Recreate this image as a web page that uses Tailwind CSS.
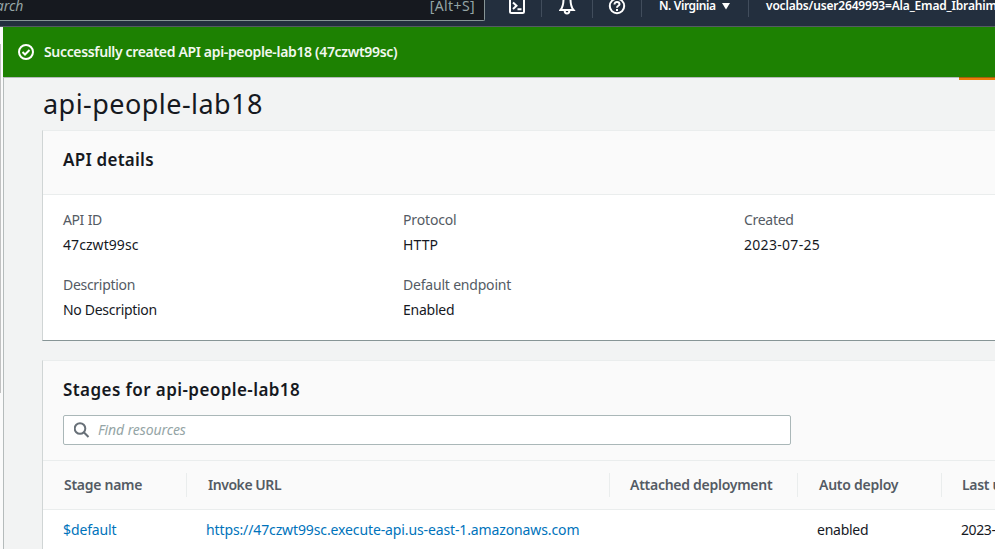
<!DOCTYPE html>
<html lang="en">
<head>
<meta charset="utf-8">
<title>API details</title>
<script src="https://cdn.jsdelivr.net/npm/@tailwindcss/browser@4"></script>
</head>
<body class="w-[995px] h-[549px] overflow-hidden bg-[#f2f3f3] font-['Noto_Sans','Open_Sans',sans-serif] text-[14px] leading-5 text-[#16191f] whitespace-nowrap">
<header class="h-[27px] bg-[#232f3e] border-b border-[#545b64] flex text-white overflow-hidden">
  <div class="w-[485px] h-[21px] shrink-0 bg-[#16191f] border-b border-r border-[#879596] rounded-br-[2px] flex justify-between pr-[9px] text-[#95a5a6] overflow-hidden">
    <span class="-ml-[18px] -mt-[4px] italic tracking-[-0.1px]">Search</span>
    <span class="-mt-[4px] tracking-[0.4px]">[Alt+S]</span>
  </div>
  <div class="w-[57px] shrink-0 h-[17px] border-r border-[#414d5c] pl-[23px]">
    <svg class="-mt-[2px]" width="18" height="17" viewBox="0 0 18 17" fill="none" stroke="#fff" stroke-width="2"><rect x="2" y="-1" width="14" height="16" rx="1.5"/><path d="M5 4.500l3.500 3.200L5 11M9.500 11.300h4"/></svg>
  </div>
  <div class="w-[51px] shrink-0 h-[18px] border-r border-[#414d5c] pl-[17px]">
    <svg width="17" height="16" viewBox="0 0 17 16" fill="none" stroke="#fff" stroke-width="2"><path d="M4.500 -1C4.500 5 4 7 1.500 10h13C12 7 11.500 5 11.500 -1M5.700 11c0 3.200 4.600 3.200 4.600 0"/></svg>
  </div>
  <div class="w-[49px] shrink-0 h-[17px] border-r border-[#414d5c] pl-[15px]">
    <svg class="-mt-[3px]" width="18" height="18" viewBox="0 0 18 18" fill="none" stroke="#fff" stroke-width="2"><circle cx="9" cy="9" r="7.200"/><path d="M6.500 7.500C6.500 4 11.500 4.500 11.500 7.200C11.500 9 9 8.500 9 10.800M9 12v2"/></svg>
  </div>
  <div class="w-[107px] shrink-0 h-[17px] border-r border-[#414d5c] pl-[17px] flex">
    <span class="w-[63px] shrink-0 -mt-[4px] text-[12px] font-semibold tracking-[-0.4px]">N. Virginia</span>
    <svg class="mt-[3px] shrink-0" width="8" height="7"><path d="M0 0h8L4 6.500z" fill="#fff"/></svg>
  </div>
  <div class="pl-[17px] -mt-[4px] text-[12px] font-semibold tracking-[-0.18px]">voclabs/user2649993=Ala_Emad_Ibrahim</div>
</header>
<div class="flex h-[522px]">
  <div class="w-[3px] shrink-0 bg-[#fafafa] pt-[17px]"><div class="w-px h-[349px] bg-[#c1c1c1]"></div></div>
  <div class="w-[992px] shrink-0 relative">
    <div class="h-[50px] bg-[#1d8102] flex items-center pl-[14px] text-[#f2f8f0] font-semibold">
      <svg class="mr-[9px]" width="18" height="18" viewBox="0 0 18 18" fill="none" stroke="#fff" stroke-width="2"><circle cx="9" cy="9" r="7"/><path d="M5.500 9l2.500 2.500L12.500 7"/></svg>
      <span class="tracking-[-0.34px]">Successfully created API api-people-lab18 (47czwt99sc)</span>
    </div>
    <div class="absolute right-0 top-[50px] w-[36px] h-[3px] bg-[#eb7d08] border-t border-[#a36010]"></div>
    <main class="h-[472px] border-t border-l border-[#b5bbbb] pl-[38px]">
      <h1 class="h-[52px] pt-[8px] pl-[1px] text-[27px] leading-9 tracking-[0.45px]">api-people-lab18</h1>
      <section class="h-[211px] bg-white border border-r-0 border-t-[#eaeded] border-l-[#d0d5d5] border-b-[#879596]">
        <h2 class="h-[64px] bg-[#fafafa] border-b border-[#eaeded] pl-5 pt-[17px] text-[17px] leading-6 font-semibold tracking-[0.25px]">API details</h2>
        <div class="grid grid-cols-[340px_341px_auto] pl-5 pt-[15px] gap-y-[20px]">
          <div><div class="text-[#545b64] mb-[5px] tracking-[-0.5px] [word-spacing:1px]">API ID</div><div class="tracking-[0.07px]">47czwt99sc</div></div>
          <div><div class="text-[#545b64] mb-[5px] tracking-[-0.15px]">Protocol</div><div class="tracking-[0.1px]">HTTP</div></div>
          <div><div class="text-[#545b64] mb-[5px] tracking-[-0.3px]">Created</div><div class="tracking-[0.3px]">2023-07-25</div></div>
          <div><div class="text-[#545b64] mb-[5px] tracking-[-0.3px]">Description</div><div class="tracking-[-0.3px]">No Description</div></div>
          <div><div class="text-[#545b64] mb-[5px] tracking-[-0.2px]">Default endpoint</div><div class="tracking-[-0.25px]">Enabled</div></div>
        </div>
      </section>
      <section class="mt-[19px] h-[189px] bg-white border border-r-0 border-b-0 border-t-[#eaeded] border-l-[#d0d5d5] overflow-hidden">
        <div class="h-[100px] bg-[#fafafa] border-b border-[#eaeded] pl-5 pt-[17px]">
          <h2 class="text-[17px] leading-6 font-semibold tracking-[0.42px]">Stages for api-people-lab18</h2>
          <div class="mt-[13px] w-[728px] h-[30px] bg-white border border-[#aab7b8] rounded-[2px] flex items-center pl-[10px] text-[#95a5a6] italic">
            <svg class="mr-[8px]" width="16" height="16" viewBox="0 0 16 16" fill="none" stroke="#687078" stroke-width="2"><circle cx="6" cy="6.500" r="5.300"/><path d="M9.800 10.300l4.700 4.700"/></svg>
            <span class="tracking-[-0.1px]">Find resources</span>
          </div>
        </div>
        <div class="h-[49px] bg-[#fafafa] border-b border-[#eaeded] flex items-center text-[#545b64] font-semibold *:shrink-0">
          <div class="w-[144px] h-6 border-r border-[#eaeded] pl-[21px] pt-[2px] tracking-[-0.28px]">Stage name</div>
          <div class="w-[423px] h-6 border-r border-[#eaeded] pl-[21px] pt-[2px] tracking-[-0.45px]">Invoke URL</div>
          <div class="w-[188px] h-6 border-r border-[#eaeded] pl-[20px] pt-[2px] tracking-[-0.27px]">Attached deployment</div>
          <div class="w-[144px] h-6 border-r border-[#eaeded] pl-[21px] pt-[2px] tracking-[-0.25px]">Auto deploy</div>
          <div class="pl-[20px] h-6 pt-[2px] tracking-[-0.3px]">Last updated</div>
        </div>
        <div class="flex pt-[10px] leading-5 *:shrink-0">
          <div class="w-[144px] pl-5 text-[#0073bb] tracking-[-0.12px]">$default</div>
          <div class="w-[611px] pl-[19px] text-[#0073bb] tracking-[-0.12px]">https://47czwt99sc.execute-api.us-east-1.amazonaws.com</div>
          <div class="w-[143px] pl-[19px] tracking-[-0.25px]">enabled</div>
          <div class="pl-5 tracking-[-0.4px]">2023-07-25</div>
        </div>
      </section>
    </main>
  </div>
</div>
</body>
</html>
